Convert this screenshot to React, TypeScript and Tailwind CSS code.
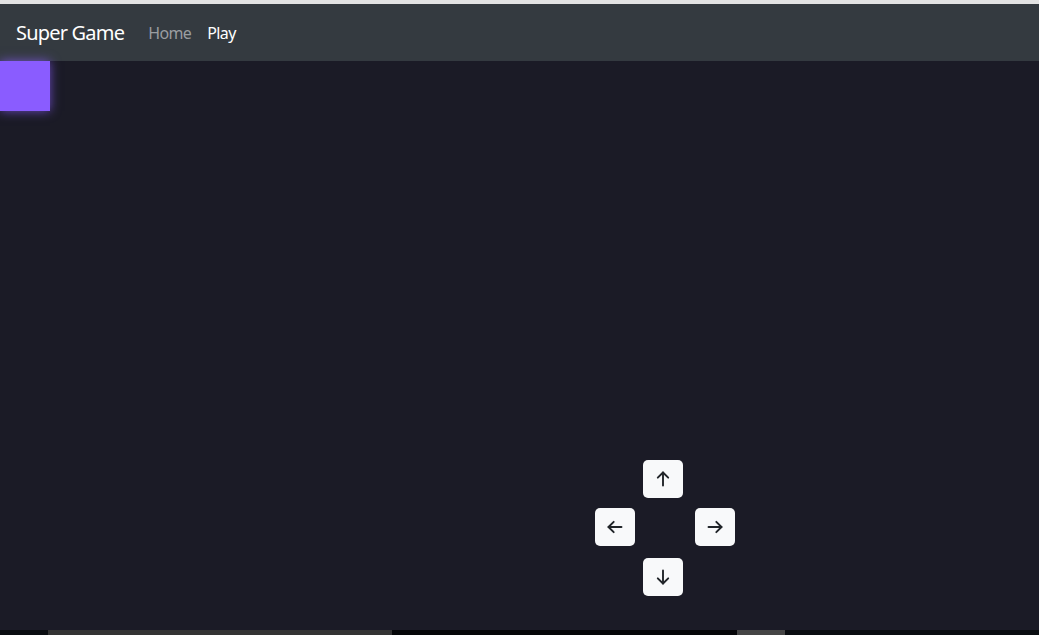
function PadButton({ children, className = '' }: { children: React.ReactNode; className?: string }) {
  return (
    <button
      type="button"
      className={`flex h-[38px] w-[40px] items-center justify-center rounded-[5px] bg-[#f8f9fa] text-[#212529] ${className}`}
    >
      {children}
    </button>
  );
}

// Arrow pointing up; rotated for the other directions
function Arrow({ rotate = 0 }: { rotate?: number }) {
  return (
    <svg
      width="20"
      height="20"
      viewBox="0 0 20 20"
      fill="none"
      stroke="currentColor"
      strokeWidth="1.9"
      strokeLinecap="round"
      strokeLinejoin="round"
      style={{ transform: `rotate(${rotate}deg)` }}
    >
      <path d="M10 16.5V3.5" />
      <path d="M4.8 8.7 10 3.5l5.2 5.2" />
    </svg>
  );
}

export default function App() {
  return (
    <div className="flex h-[635px] w-full flex-col overflow-hidden bg-[#1b1b26] font-['Noto_Sans',sans-serif]">
      {/* top strip */}
      <div className="h-[4px] shrink-0 bg-[#e3e3e3]" />

      {/* Navbar */}
      <nav className="flex h-[57px] shrink-0 items-center bg-[#343a40] px-4">
        <a className="mr-4 text-[20px] leading-[30px] tracking-[-0.8px] text-white">Super Game</a>
        <ul className="flex items-center text-[16px] tracking-[-0.6px]">
          <li>
            <a className="px-2 text-[#9a9da0]">Home</a>
          </li>
          <li>
            <a className="px-2 text-white">Play</a>
          </li>
        </ul>
      </nav>

      {/* Game area */}
      <main className="relative flex-1 bg-[#1b1b26]">
        {/* Player */}
        <div className="absolute left-0 top-0 h-[50px] w-[50px] bg-[#8a5cff] shadow-[0_0_10px_rgba(138,92,255,0.7)]" />

        {/* Controls */}
        <div className="absolute left-[595px] top-[399px] flex w-[140px] flex-col">
          <PadButton className="ml-[48px]">
            <Arrow />
          </PadButton>
          <div className="mt-[10px] flex justify-between">
            <PadButton>
              <Arrow rotate={-90} />
            </PadButton>
            <PadButton>
              <Arrow rotate={90} />
            </PadButton>
          </div>
          <PadButton className="ml-[48px] mt-[12px]">
            <Arrow rotate={180} />
          </PadButton>
        </div>
      </main>

      {/* bottom strip */}
      <div className="flex h-[5px] shrink-0 bg-[#0a0d11]">
        <div className="w-[48px]" />
        <div className="w-[344px] bg-[#333333]" />
        <div className="w-[345px] bg-[#050608]" />
        <div className="w-[48px] bg-[#454545]" />
        <div className="flex-1" />
      </div>
    </div>
  );
}
